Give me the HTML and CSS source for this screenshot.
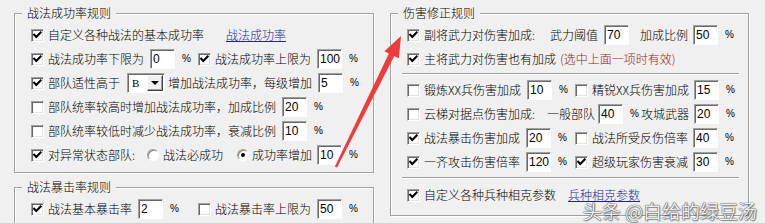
FILE: index.html
```html
<!DOCTYPE html>
<html lang="zh-CN">
<head>
<meta charset="utf-8">
<title>规则设置</title>
<link rel="stylesheet" href="styles.css">
</head>
<body>
<div class="page">
  <div class="col">
    <fieldset class="grp grp-left">
      <legend>战法成功率规则</legend>
      <div class="row">
        <span class="cb on"><svg width="11" height="11" viewBox="0 0 11 11"><polyline points="2.2,4.8 4.3,6.9 8.6,2.6" /></svg></span>
        <span>自定义各种战法的基本成功率</span>
        <a class="lnk ml22">战法成功率</a>
      </div>
      <div class="row">
        <span class="cell c1l">
          <span class="cb on"><svg width="11" height="11" viewBox="0 0 11 11"><polyline points="2.2,4.8 4.3,6.9 8.6,2.6" /></svg></span>
          <span>战法成功率下限为</span>
          <span class="inp">0</span><span class="pct">%</span>
        </span>
        <span class="cell">
          <span class="cb on"><svg width="11" height="11" viewBox="0 0 11 11"><polyline points="2.2,4.8 4.3,6.9 8.6,2.6" /></svg></span>
          <span>战法成功率上限为</span>
          <span class="inp">100</span><span class="pct">%</span>
        </span>
      </div>
      <div class="row">
        <span class="cb on"><svg width="11" height="11" viewBox="0 0 11 11"><polyline points="2.2,4.8 4.3,6.9 8.6,2.6" /></svg></span>
        <span>部队适性高于</span>
        <span class="sel"><span class="val">B</span><span class="btn"></span></span>
        <span class="ml3">增加战法成功率，每级增加</span>
        <span class="inp">5</span><span class="pct">%</span>
      </div>
      <div class="row">
        <span class="cb"></span>
        <span>部队统率较高时增加战法成功率，加成比例</span>
        <span class="inp">20</span><span class="pct">%</span>
      </div>
      <div class="row">
        <span class="cb"></span>
        <span>部队统率较低时减少战法成功率，衰减比例</span>
        <span class="inp">10</span><span class="pct">%</span>
      </div>
      <div class="row">
        <span class="cb on"><svg width="11" height="11" viewBox="0 0 11 11"><polyline points="2.2,4.8 4.3,6.9 8.6,2.6" /></svg></span>
        <span>对异常状态部队:</span>
        <span class="rd ml12"></span><span class="ml4">战法必成功</span>
        <span class="rd on ml14"></span><span class="ml3">成功率增加</span>
        <span class="inp ml5">10</span><span class="pct">%</span>
      </div>
    </fieldset>

    <fieldset class="grp grp-left">
      <legend>战法暴击率规则</legend>
      <div class="row">
        <span class="cell c1l">
          <span class="cb on"><svg width="11" height="11" viewBox="0 0 11 11"><polyline points="2.2,4.8 4.3,6.9 8.6,2.6" /></svg></span>
          <span>战法基本暴击率</span>
          <span class="inp">2</span><span class="pct">%</span>
        </span>
        <span class="cell">
          <span class="cb"></span>
          <span>战法暴击率上限为</span>
          <span class="inp">50</span><span class="pct">%</span>
        </span>
      </div>
    </fieldset>
  </div>

  <fieldset class="grp grp-right">
    <legend>伤害修正规则</legend>
    <div class="row">
      <span class="cb on"><svg width="11" height="11" viewBox="0 0 11 11"><polyline points="2.2,4.8 4.3,6.9 8.6,2.6" /></svg></span>
      <span>副将武力对伤害加成:</span>
      <span class="ml15">武力阈值</span>
      <span class="inp">70</span>
      <span class="ml11">加成比例</span>
      <span class="inp ml5">50</span><span class="pct">%</span>
    </div>
    <div class="row">
      <span class="cb on"><svg width="11" height="11" viewBox="0 0 11 11"><polyline points="2.2,4.8 4.3,6.9 8.6,2.6" /></svg></span>
      <span>主将武力对伤害也有加成</span>
      <span class="note">(选中上面一项时有效)</span>
    </div>
    <div class="sep"></div>
    <div class="row">
      <span class="cell c1r">
        <span class="cb"></span>
        <span>锻炼XX兵伤害加成</span>
        <span class="inp">10</span><span class="pct">%</span>
      </span>
      <span class="cell">
        <span class="cb"></span>
        <span>精锐XX兵伤害加成</span>
        <span class="inp ml5">15</span><span class="pct">%</span>
      </span>
    </div>
    <div class="row">
      <span class="cb"></span>
      <span>云梯对据点伤害加成:</span>
      <span class="ml12">一般部队</span>
      <span class="inp ml3">40</span><span class="pct">%</span>
      <span class="ml4">攻城武器</span>
      <span class="inp ml5">20</span><span class="pct">%</span>
    </div>
    <div class="row">
      <span class="cell c1r">
        <span class="cb on"><svg width="11" height="11" viewBox="0 0 11 11"><polyline points="2.2,4.8 4.3,6.9 8.6,2.6" /></svg></span>
        <span>战法暴击伤害加成</span>
        <span class="inp">20</span><span class="pct">%</span>
      </span>
      <span class="cell">
        <span class="cb"></span>
        <span>战法所受反伤倍率</span>
        <span class="inp ml5">40</span><span class="pct">%</span>
      </span>
    </div>
    <div class="row">
      <span class="cell c1r">
        <span class="cb on"><svg width="11" height="11" viewBox="0 0 11 11"><polyline points="2.2,4.8 4.3,6.9 8.6,2.6" /></svg></span>
        <span>一齐攻击伤害倍率</span>
        <span class="inp">120</span><span class="pct">%</span>
      </span>
      <span class="cell">
        <span class="cb on"><svg width="11" height="11" viewBox="0 0 11 11"><polyline points="2.2,4.8 4.3,6.9 8.6,2.6" /></svg></span>
        <span>超级玩家伤害衰减</span>
        <span class="inp ml5">30</span><span class="pct">%</span>
      </span>
    </div>
    <div class="sep sep2"></div>
    <div class="row">
      <span class="cb on"><svg width="11" height="11" viewBox="0 0 11 11"><polyline points="2.2,4.8 4.3,6.9 8.6,2.6" /></svg></span>
      <span>自定义各种兵种相克参数</span>
      <a class="lnk ml12">兵种相克参数</a>
    </div>
  </fieldset>

  <svg class="arrow" width="765" height="223" viewBox="0 0 765 223">
    <polygon points="401,36 398.8,58.4 394.3,56.1 337.1,167.5 334.9,166.5 388.9,53.5 384.4,51.2" />
  </svg>
  <div class="wm">头条 @白给的绿豆汤</div>
</div>
</body>
</html>
```

FILE: styles.css
```css
html, body {
  margin: 0;
  padding: 0;
}
body {
  background: #f0f0f0;
  color: #000;
  font: 300 12px/14px "Noto Sans CJK SC", "Liberation Sans", sans-serif;
  width: 765px;
  height: 223px;
  overflow: hidden;
}
.page {
  position: relative;
  display: flex;
  align-items: flex-start;
  gap: 16px;
  padding: 6px 0 0 14px;
  height: 223px;
  box-sizing: border-box;
}
.col {
  display: flex;
  flex-direction: column;
  gap: 7px;
  width: 360px;
}
.grp {
  margin: 0;
  min-width: 0;
  box-sizing: border-box;
  padding: 3px 0 5px 16px;
  border: 1px solid #a0a0a0;
  box-shadow: inset 1px 1px 0 #fff, 1px 1px 0 #fff;
}
.grp-left {
  width: 360px;
}
.grp-right {
  width: 359px;
  padding-bottom: 8px;
}
.grp legend {
  padding: 0 5px;
  margin-left: -9px;
  line-height: 14px;
  background: #f0f0f0;
}
.row {
  display: flex;
  align-items: center;
  height: 24px;
  white-space: nowrap;
}
.cell {
  display: flex;
  align-items: center;
}
.c1l { width: 167px; }
.c1r { width: 168px; }

.cb {
  flex: none;
  display: block;
  width: 13px;
  height: 13px;
  box-sizing: border-box;
  margin-right: 4px;
  background: #fff;
  border: 1px solid;
  border-color: #a0a0a0 #fff #fff #a0a0a0;
  box-shadow: inset 1px 1px 0 #696969, inset -1px -1px 0 #e3e3e3;
}
.cb svg {
  display: block;
}
.cb polyline {
  fill: none;
  stroke: #000;
  stroke-width: 2.1;
  stroke-linecap: square;
}
.rd {
  flex: none;
  width: 12px;
  height: 12px;
  box-sizing: border-box;
  border-radius: 50%;
  background: #fff;
  border: 1px solid;
  border-color: #a0a0a0 #fff #fff #a0a0a0;
  box-shadow: inset 1px 1px 0 #8a8a8a;
  display: flex;
  align-items: center;
  justify-content: center;
}
.rd.on::after {
  content: "";
  width: 4px;
  height: 4px;
  border-radius: 50%;
  background: #000;
}
.inp {
  flex: none;
  width: 25px;
  height: 20px;
  box-sizing: border-box;
  margin-left: 6px;
  padding: 1px 0 0 2px;
  background: #fff;
  border: 1px solid;
  border-color: #a0a0a0 #fff #fff #a0a0a0;
  box-shadow: inset 1px 1px 0 #696969;
  font: 12px/16px "Liberation Sans", sans-serif;
}
.pct {
  flex: none;
  width: 7px;
  margin-left: 7px;
  font: 10px/12px "Liberation Sans", sans-serif;
  overflow: visible;
}
.sel {
  flex: none;
  display: flex;
  align-items: center;
  justify-content: space-between;
  width: 38px;
  height: 20px;
  box-sizing: border-box;
  margin-left: 7px;
  padding: 1px 1px 1px 4px;
  background: #fff;
  border: 1px solid;
  border-color: #a0a0a0 #fff #fff #a0a0a0;
  box-shadow: inset 1px 1px 0 #696969;
  font: 11px/14px "Liberation Serif", serif;
}
.sel .btn {
  width: 16px;
  height: 16px;
  box-sizing: border-box;
  background: #f0f0f0;
  border: 1px solid;
  border-color: #fff #404040 #404040 #fff;
  box-shadow: inset -1px -1px 0 #a0a0a0;
  display: flex;
  align-items: center;
  justify-content: center;
}
.sel .btn::after {
  content: "";
  border-left: 4px solid transparent;
  border-right: 4px solid transparent;
  border-top: 4px solid #000;
}
.lnk {
  color: #1a2896;
  text-decoration: underline;
}
.note {
  color: #a31616;
  margin-left: 4px;
}
.sep {
  height: 1px;
  background: #a0a0a0;
  box-shadow: 0 1px 0 #fff;
  margin: 2px 9px 4px -5px;
}
.sep2 {
  margin-top: 3px;
  margin-bottom: 5px;
}
.ml3 { margin-left: 3px; }
.ml4 { margin-left: 4px; }
.ml5 { margin-left: 5px; }
.ml11 { margin-left: 11px; }
.ml12 { margin-left: 12px; }
.ml14 { margin-left: 14px; }
.ml15 { margin-left: 15px; }
.ml22 { margin-left: 22px; }

.arrow {
  position: absolute;
  left: 0;
  top: 0;
  pointer-events: none;
}
.arrow polygon {
  fill: #ee3b3b;
}
.wm {
  position: absolute;
  right: 8px;
  bottom: 1px;
  font: 400 19px/22px "Noto Sans CJK SC", sans-serif;
  color: rgba(255, 255, 255, 0.92);
  text-shadow: 0 0 1px #444, 0 0 1px #444, 1px 1px 1px rgba(0, 0, 0, 0.35);
  white-space: nowrap;
}
```
